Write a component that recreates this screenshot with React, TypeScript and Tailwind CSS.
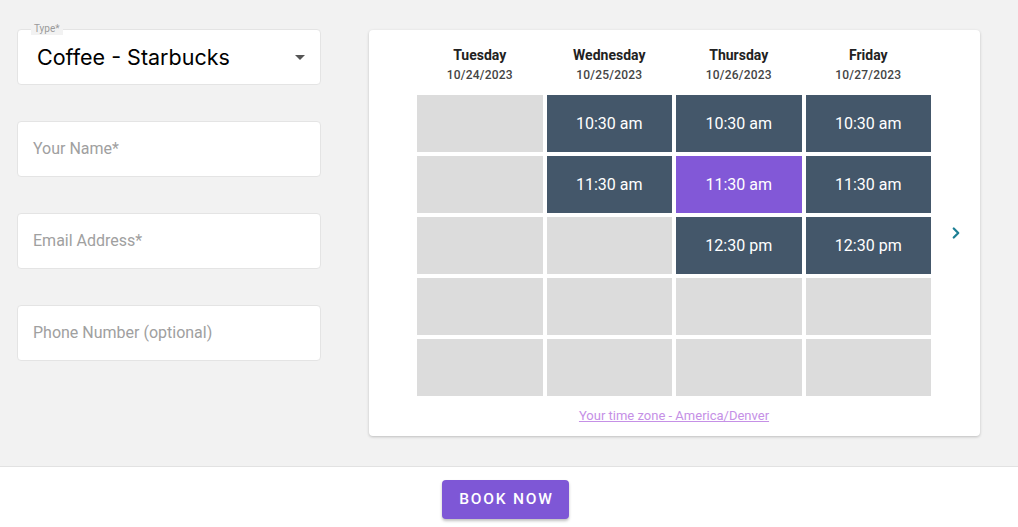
import { ChevronRight } from 'lucide-react';

const days = [
  { name: 'Tuesday', date: '10/24/2023' },
  { name: 'Wednesday', date: '10/25/2023' },
  { name: 'Thursday', date: '10/26/2023' },
  { name: 'Friday', date: '10/27/2023' },
];

type Slot = { label?: string; selected?: boolean };

// rows x columns
const slots: Slot[][] = [
  [{}, { label: '10:30 am' }, { label: '10:30 am' }, { label: '10:30 am' }],
  [{}, { label: '11:30 am' }, { label: '11:30 am', selected: true }, { label: '11:30 am' }],
  [{}, {}, { label: '12:30 pm' }, { label: '12:30 pm' }],
  [{}, {}, {}, {}],
  [{}, {}, {}, {}],
];

function Field({ placeholder }: { placeholder: string }) {
  return (
    <div className="h-[56px] bg-white rounded-[4px] border border-[#e4e4e4] flex items-center px-[15px]">
      <span className="text-[16px] text-[#a0a0a0]">{placeholder}</span>
    </div>
  );
}

function SlotCell({ slot }: { slot: Slot }) {
  if (!slot.label) return <div className="h-[57px] bg-[#dcdcdc]" />;
  return (
    <div
      className={
        slot.selected
          ? 'h-[57px] bg-[#8258d7] flex items-center justify-center text-white text-[16px]'
          : 'h-[57px] bg-[#44576a] flex items-center justify-center text-white text-[16px]'
      }
    >
      {slot.label}
    </div>
  );
}

export default function App() {
  return (
    <div className="w-[1018px] h-[527px] flex flex-col font-['Roboto',sans-serif] bg-white overflow-hidden">
      <div className="h-[467px] bg-[#f2f2f2] border-b border-[#e2e2e2] flex pl-[17px] pt-[30px]">
        <div className="w-[304px] -mt-[1px] flex flex-col gap-[36px]">
          <div className="relative h-[56px] bg-white rounded-[4px] border border-[#e4e4e4] flex items-center pl-[19px] pr-[14px]">
            <span className="absolute left-[13px] -top-[7px] px-[3px] text-[10px] leading-[12px] text-[#9a9a9a] bg-[#f2f2f2]">
              Type*
            </span>
            <span className="flex-1 text-[21.5px] text-black font-['Inter',sans-serif] pt-[1px]">
              Coffee - Starbucks
            </span>
            <svg width="10" height="5" viewBox="0 0 10 5" className="mr-[1px]">
              <path d="M0 0h10L5 5z" fill="#555" />
            </svg>
          </div>
          <Field placeholder="Your Name*" />
          <Field placeholder="Email Address*" />
          <Field placeholder="Phone Number (optional)" />
        </div>

        <div className="ml-[48px] w-[611px] h-[406px] bg-white rounded-[4px] shadow-[0_1px_3px_rgba(0,0,0,0.22)] flex items-center">
          <div className="w-[48px]" />
          <div className="w-[514px] self-start flex flex-col pt-[15px]">
            <div className="grid grid-cols-4 gap-x-[4px]">
              {days.map((d) => (
                <div key={d.name} className="flex flex-col items-center">
                  <span className="text-[14px] leading-[20px] font-bold text-[#222]">{d.name}</span>
                  <span className="text-[12px] leading-[18px] mt-[1px] font-medium text-[#444] tracking-[0.2px]">
                    {d.date}
                  </span>
                </div>
              ))}
            </div>
            <div className="grid grid-cols-4 gap-x-[4px] gap-y-[4px] mt-[11px]">
              {slots.flat().map((s, i) => (
                <SlotCell key={i} slot={s} />
              ))}
            </div>
            <div className="mt-[7px] text-center">
              <span className="text-[13px] leading-[16px] text-[#c590e6] underline">
                Your time zone - America/Denver
              </span>
            </div>
          </div>
          <div className="flex-1 flex justify-center pl-[1px]">
            <ChevronRight size={18} strokeWidth={3} color="#1d7f94" />
          </div>
        </div>
      </div>
      <div className="flex-1 flex justify-center pt-[13px] pr-[7px]">
        <button className="h-[39px] w-[127px] rounded-[4px] bg-[#7e57d6] text-white text-[15.5px] font-medium tracking-[1.8px] pl-[2px] shadow-[0_2px_3px_rgba(0,0,0,0.25)]">
          BOOK NOW
        </button>
      </div>
    </div>
  );
}
